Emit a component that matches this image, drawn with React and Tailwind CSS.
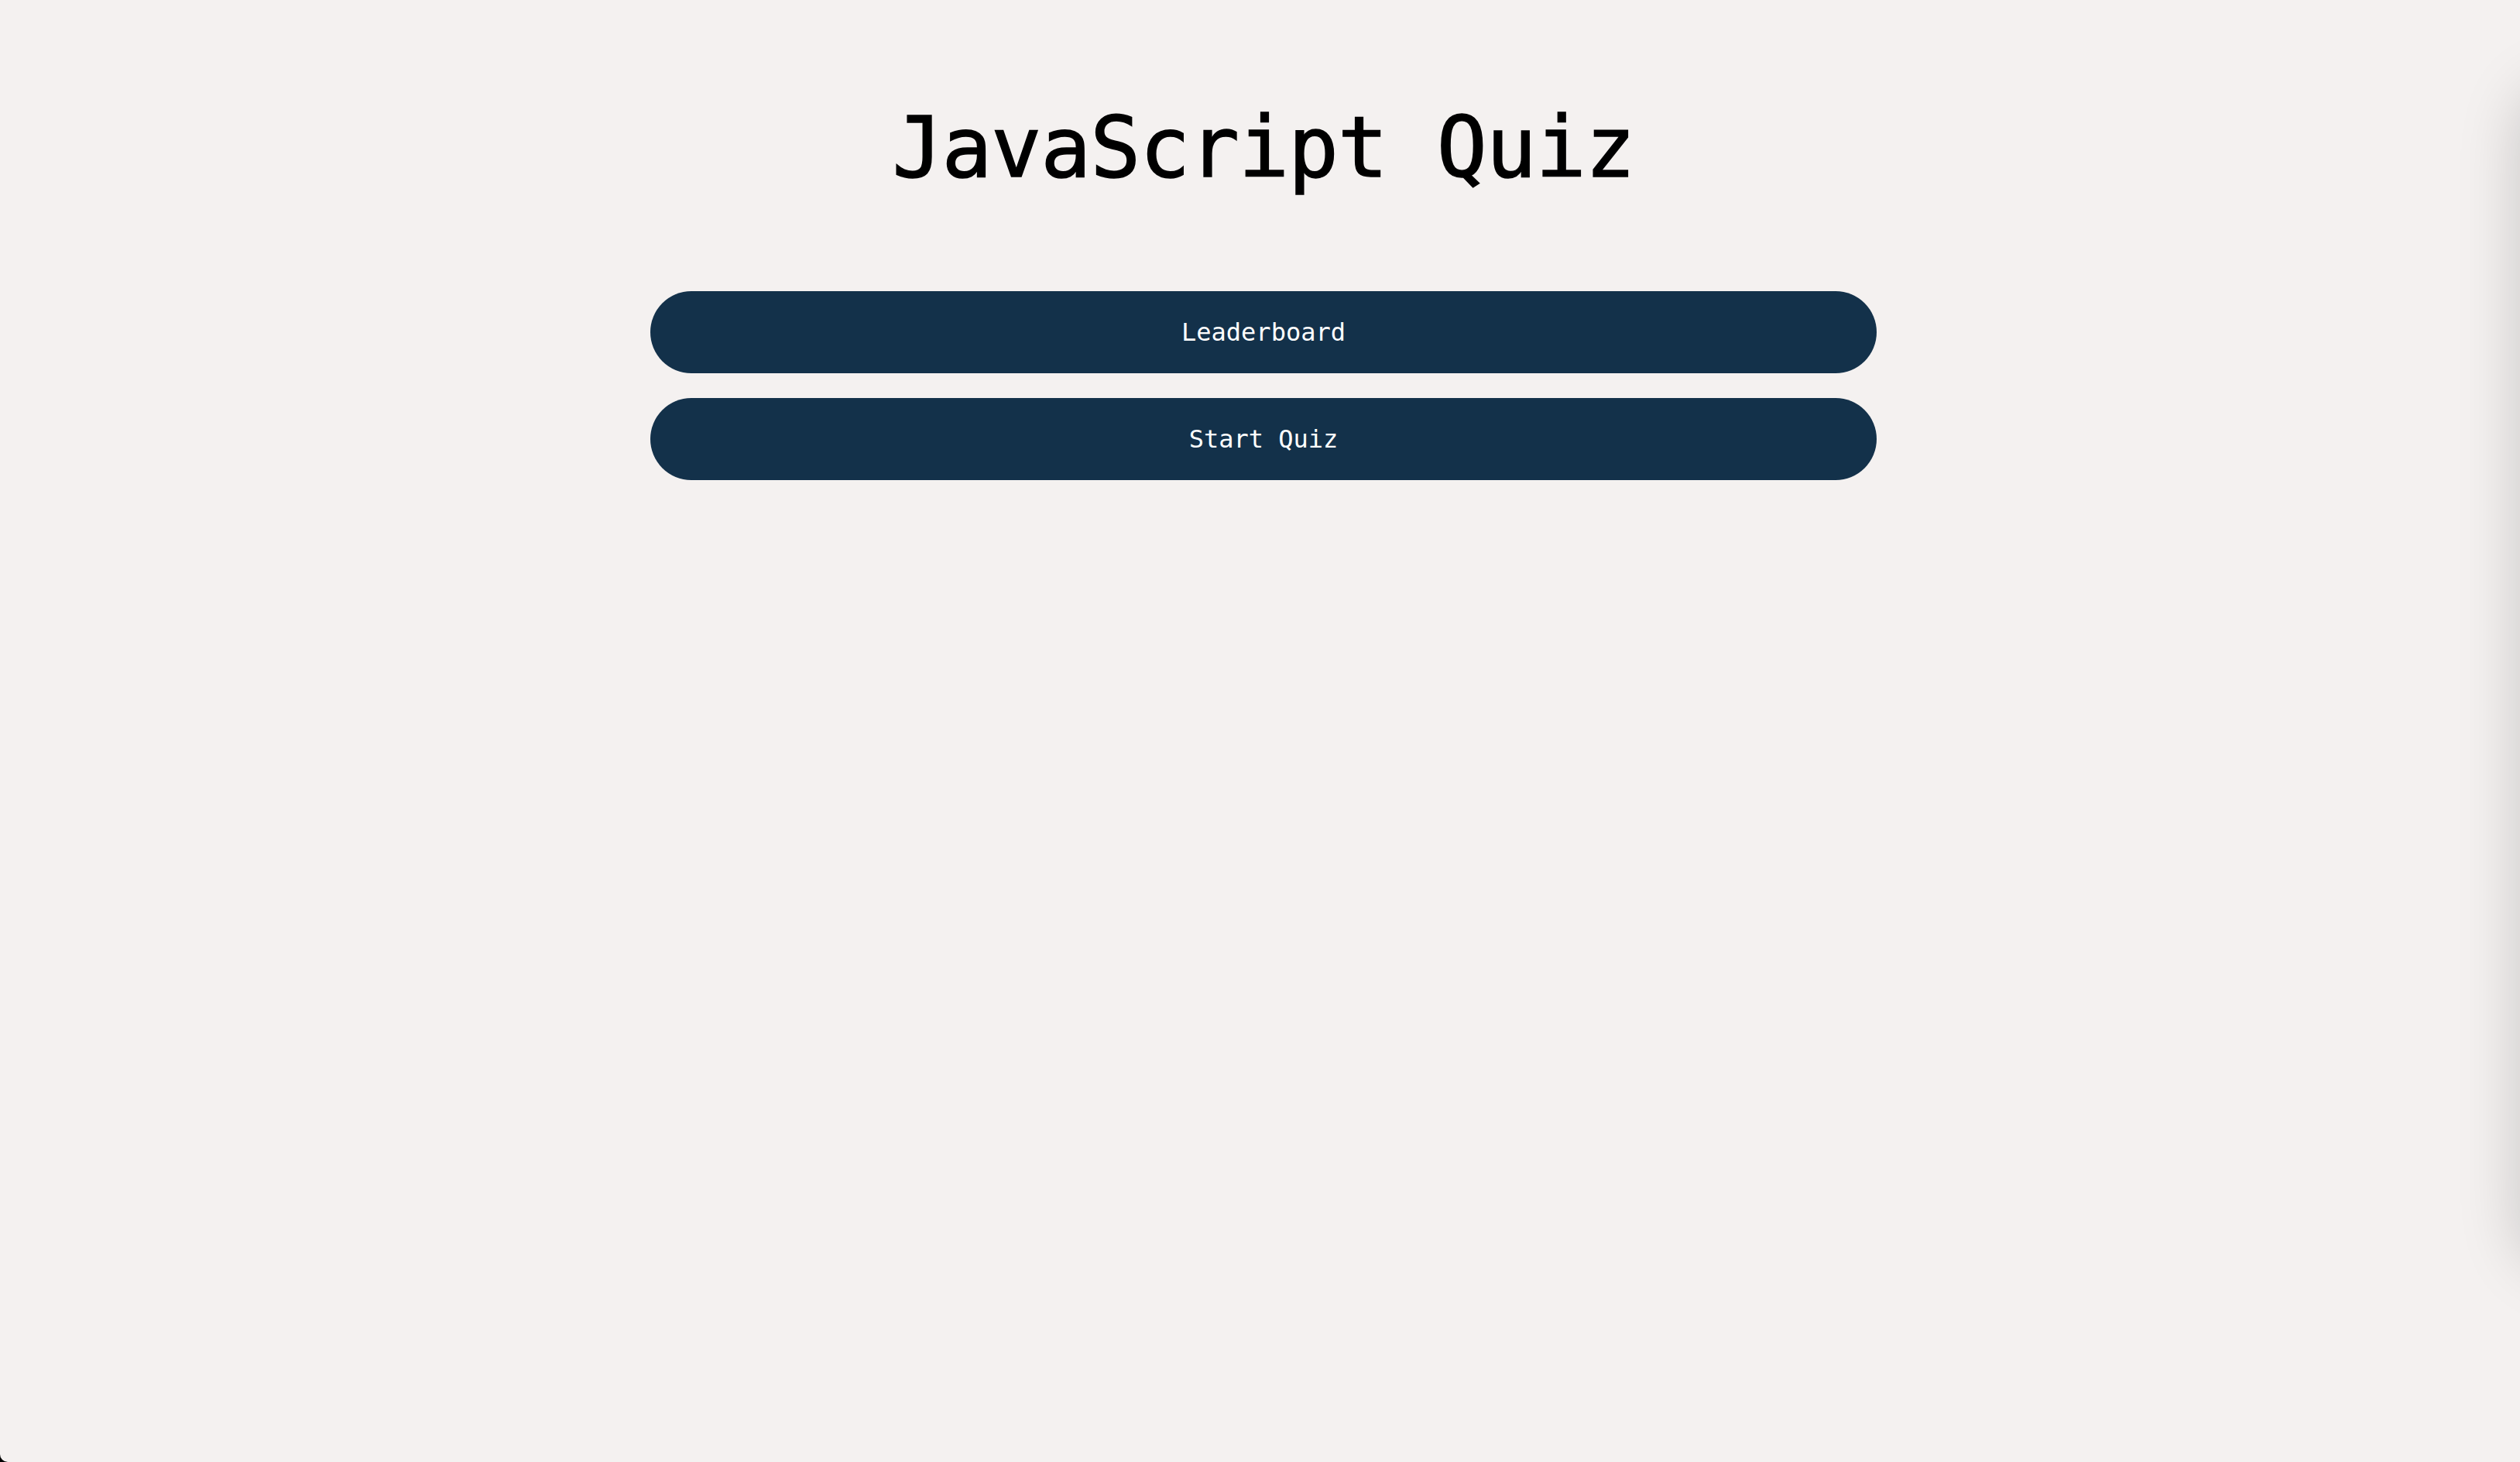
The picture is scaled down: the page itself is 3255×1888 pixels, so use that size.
import React from "react";

const App = () => {
  return (
    <div className="w-full h-screen bg-black">
      <div className="relative w-full h-full overflow-hidden bg-[#f4f1f0] rounded-bl-[10px] font-['DejaVu_Sans_Mono','Liberation_Mono',monospace]">
        {/* drawer peeking in from the right, only its shadow shows */}
        <div className="absolute left-full top-[110px] bottom-[250px] w-[400px] rounded-[60px] bg-[#f4f1f0] shadow-[0_0_80px_rgba(0,0,0,0.18)]"></div>

        <div className="flex flex-col items-center pl-[9px] pt-[137px]">
          <h1 className="text-[108px] leading-none text-black tracking-[-0.01em] [-webkit-text-stroke:1.5px_black]">
            JavaScript Quiz
          </h1>

          <div className="flex flex-col gap-8 w-[1584px] mt-[131px]">
            <button className="h-[106px] w-full rounded-full bg-[#13314a] text-[32px] text-white">
              Leaderboard
            </button>
            <button className="h-[106px] w-full rounded-full bg-[#13314a] text-[32px] text-white">
              Start Quiz
            </button>
          </div>
        </div>
      </div>
    </div>
  );
};

export default App;
